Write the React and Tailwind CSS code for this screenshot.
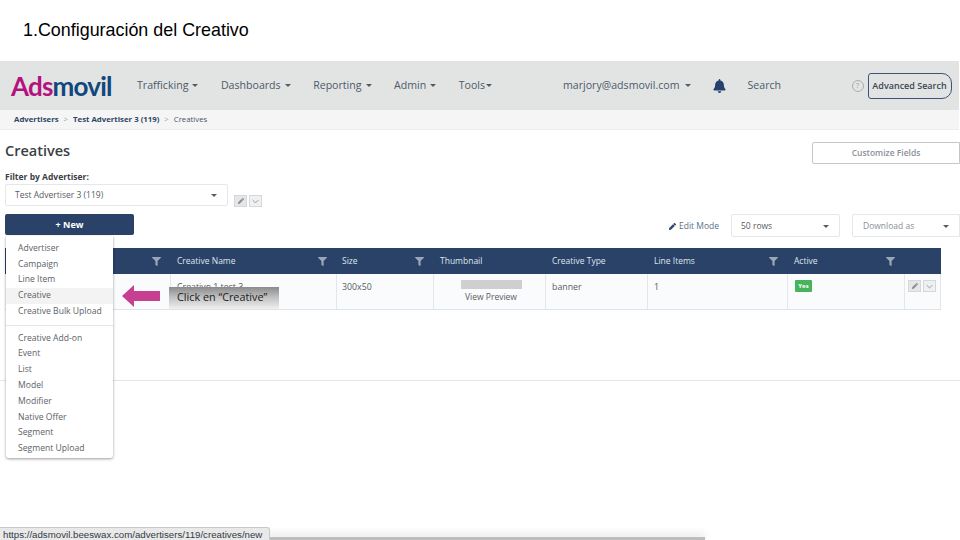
import { FaBell, FaFilter, FaPen } from 'react-icons/fa'

const NAV_ITEMS = ['Trafficking', 'Dashboards', 'Reporting', 'Admin']
const MENU_TOP = ['Advertiser', 'Campaign', 'Line Item', 'Creative', 'Creative Bulk Upload']
const MENU_BOTTOM = ['Creative Add-on', 'Event', 'List', 'Model', 'Modifier', 'Native Offer', 'Segment', 'Segment Upload']

const Caret = ({ className = 'border-t-[#555b63]' }) => (
  <span className={`inline-block w-0 h-0 border-x-[3px] border-x-transparent border-t-[3px] ${className}`} />
)

const MiniButtons = ({ className = '' }) => (
  <div className={`flex gap-[2px] ${className}`}>
    <span className="w-[13px] h-[12px] bg-[#e4e6e8] border border-[#d5d8da] flex items-center justify-center">
      <FaPen className="w-[6px] h-[6px] text-[#8a8f94]" />
    </span>
    <span className="w-[13px] h-[12px] bg-[#eef0f1] border border-[#d5d8da] flex items-center justify-center">
      <svg viewBox="0 0 10 6" className="w-[7px] h-[5px]" fill="none" stroke="#8a8f94" strokeWidth={1.2}>
        <path d="M1 1l4 4 4-4" />
      </svg>
    </span>
  </div>
)

const HeaderCell = ({ label, width, filter, pad = 'pl-[7px] pr-[9px]' }) => (
  <div className={`h-full flex items-center justify-between shrink-0 ${width} ${pad}`}>
    <span className="pt-[1px]">{label}</span>
    {filter && <FaFilter className="w-[9px] h-[9px] text-[#98a6b8]" />}
  </div>
)

const BodyCell = ({ width, children, className = 'pl-[6px] pt-[7px]' }) => (
  <div className={`h-full shrink-0 border-r border-[#e3e6ea] ${width} ${className}`}>{children}</div>
)

function DropdownMenu() {
  return (
    <div className="absolute left-[6px] top-[236px] w-[107px] h-[222px] bg-white rounded-b-[3px] shadow-[0_1px_3px_rgba(0,0,0,0.4)] text-[8.6px] leading-[15.7px] text-[#5b6167] pt-[5px]">
      {MENU_TOP.map(item => (
        <div key={item} className={`pl-[12px] ${item === 'Creative' ? 'bg-[#f3f3f3]' : ''}`}>{item}</div>
      ))}
      <div className="border-t border-[#e5e5e5] mt-[5px] mb-[5px]" />
      {MENU_BOTTOM.map(item => (
        <div key={item} className="pl-[12px] leading-[15.8px]">{item}</div>
      ))}
    </div>
  )
}

function Callout() {
  return (
    <>
      <svg viewBox="0 0 39 22" className="absolute left-[122px] top-[285px] w-[39px] h-[22px]">
        <path d="M0 11 L12 0 V6 H38 V16 H12 V22 Z" fill="#c63f90" />
      </svg>
      <div className="absolute left-[169px] top-[287px] w-[110px] h-[22px] bg-gradient-to-b from-[#8b8b8b] via-[#c4c4c4] to-[#f0f0f0] pl-[8px] pt-[2px] text-[10.8px] leading-[15px] text-[#1a1a1a]">
        Click en “Creative”
      </div>
    </>
  )
}

export default function App() {
  return (
    <div className="relative w-[960px] h-[540px] overflow-hidden bg-white font-['Open_Sans',sans-serif]">
      {/* Slide title */}
      <div className="h-[61px] pl-[23px] pt-[19px] text-[17.9px] leading-[22px] text-black font-['Liberation_Sans',sans-serif]">
        1.Configuración del Creativo
      </div>

      {/* Top nav */}
      <div className="w-[959px] h-[49px] bg-[#e2e4e4] flex items-center text-[10.6px] text-[#4d5a68]">
        <div className="w-[137px] shrink-0 pl-[11px] text-[26px] leading-[30px] font-bold tracking-[-0.8px] font-['Lato',sans-serif]">
          <span className="text-[#b5127f]">Ads</span>
          <span className="text-[#12477e]">movil</span>
        </div>
        <div className="flex gap-[22.5px] shrink-0">
          {NAV_ITEMS.map(item => (
            <span key={item} className="flex items-center gap-[4px]">{item} <Caret /></span>
          ))}
          <span className="flex items-center gap-[1px]">Tools <Caret /></span>
        </div>
        <span className="ml-[71px] shrink-0 flex items-center gap-[5px]">marjory@adsmovil.com <Caret /></span>
        <FaBell className="ml-[22px] w-[13px] h-[14px] shrink-0 text-[#25426f]" />
        <span className="ml-[22px] w-[104px] shrink-0">Search</span>
        <span className="w-[12px] h-[12px] shrink-0 rounded-full border border-[#a9adb0] text-[7px] leading-[10px] text-center text-[#9a9ea2]">?</span>
        <span className="ml-[4px] h-[26px] w-[84px] shrink-0 rounded-r-[10px] rounded-l-[3px] border border-[#3d5476] flex items-center justify-center text-[9px] font-semibold text-[#3b4653]">
          Advanced Search
        </span>
      </div>

      {/* Breadcrumb */}
      <div className="w-[959px] h-[20px] bg-[#f5f5f5] border-b border-[#ececec] flex items-center pl-[14px] text-[7.8px] text-[#47566a]">
        <span className="font-bold text-[#2f4564]">Advertisers</span>
        <span className="mx-[5px] text-[#a0a4a8]">&gt;</span>
        <span className="font-bold text-[#2f4564]">Test Advertiser 3 (119)</span>
        <span className="mx-[5px] text-[#a0a4a8]">&gt;</span>
        <span>Creatives</span>
      </div>

      {/* Heading row */}
      <div className="h-[45px] flex justify-between pl-[5px]">
        <h1 className="pt-[10px] text-[14.5px] leading-[22px] font-semibold text-[#3b3f44]">Creatives</h1>
        <div className="mt-[12px] w-[148px] h-[22px] pt-[1px] border border-[#c4c7ca] rounded-l-[2px] flex items-center justify-center text-[8.5px] font-semibold text-[#8b9097]">
          Customize Fields
        </div>
      </div>

      {/* Filter */}
      <div className="pl-[5px] text-[8.5px] leading-[12px] font-bold text-[#3b3f44] h-[9px] -mt-[4px] mb-[4px]">Filter by Advertiser:</div>
      <div className="flex pl-[5px] mt-[4px]">
        <div className="w-[223px] h-[22px] border border-[#e6e7e9] rounded-[2px] pl-[9px] pr-[10px] flex items-center justify-between text-[8.5px] text-[#555b63]">
          Test Advertiser 3 (119)
          <Caret />
        </div>
        <MiniButtons className="ml-[6px] mt-[11px]" />
      </div>

      {/* Toolbar */}
      <div className="flex items-start pl-[5px] mt-[7px]">
        <div className="w-[129px] h-[21px] pt-[1px] bg-[#2a4268] rounded-[2px] flex items-center justify-center text-[9px] font-bold text-white">+ New</div>
        <div className="ml-auto flex items-center">
          <span className="flex items-center gap-[3px] pt-[1px] text-[8.5px] text-[#5c6f88]">
            <FaPen className="w-[7px] h-[7px] text-[#33496b]" /> Edit Mode
          </span>
          <div className="ml-[12px] w-[109px] h-[23px] pt-[1px] border border-[#e6e7e9] rounded-[2px] pl-[9px] pr-[10px] flex items-center justify-between text-[8.5px] text-[#555b63]">
            50 rows <Caret />
          </div>
          <div className="ml-[12px] w-[108px] h-[23px] pt-[1px] border border-[#e6e7e9] rounded-l-[2px] pl-[10px] pr-[10px] flex items-center justify-between text-[8.5px] text-[#8b9097]">
            Download as <Caret />
          </div>
        </div>
      </div>

      {/* Table */}
      <div className="ml-[5px] w-[936px] mt-[11px]">
        <div className="h-[26px] bg-[#2a4268] flex items-center text-[8.5px] font-medium text-[#dfe5ee]">
          <HeaderCell width="w-[165px]" filter />
          <HeaderCell width="w-[166px]" label="Creative Name" filter />
          <HeaderCell width="w-[97px]" label="Size" pad="pl-[6px] pr-[9px]" filter />
          <HeaderCell width="w-[112px]" label="Thumbnail" />
          <HeaderCell width="w-[102px]" label="Creative Type" />
          <HeaderCell width="w-[140px]" label="Line Items" filter />
          <HeaderCell width="w-[117px]" label="Active" filter />
        </div>
        <div className="h-[36px] flex bg-[#fafbfd] border-b border-[#dfe2e6] text-[8.8px] leading-[12px] text-[#555b63]">
          <BodyCell width="w-[166px]" />
          <BodyCell width="w-[166px]">Creativo 1 test 3</BodyCell>
          <BodyCell width="w-[97px]" className="pl-[5px] pt-[7px]">300x50</BodyCell>
          <BodyCell width="w-[112px]" className="flex flex-col items-center pl-[3px] pt-[6px]">
            <span className="w-[61px] h-[9px] bg-[#cfcfcf]" />
            <span className="mt-[2px] text-[8.5px]">View Preview</span>
          </BodyCell>
          <BodyCell width="w-[102px]">banner</BodyCell>
          <BodyCell width="w-[140px]">1</BodyCell>
          <BodyCell width="w-[117px]" className="pl-[7px] pt-[6px]">
            <span className="block w-[17px] h-[12px] rounded-[1px] bg-[#47b35b] text-[6px] leading-[12px] text-center font-bold text-white">Yes</span>
          </BodyCell>
          <div className="flex-1 border-r border-[#e3e6ea] pl-[3px] pt-[6px]">
            <MiniButtons />
          </div>
        </div>
      </div>
      <div className="mt-[70px] border-t border-[#e3e5e8]" />

      <DropdownMenu />
      <Callout />

      {/* Browser status bar */}
      <div className="absolute left-0 bottom-0 w-[705px] h-[3px] bg-[#bdbdbd] shadow-[0_-2px_8px_rgba(0,0,0,0.2)]" />
      <div className="absolute left-0 bottom-0 w-[270px] h-[13px] bg-[#e9e9e9] border-t border-r border-[#c8c8c8] rounded-tr-[3px] pl-[3px] text-[9.7px] leading-[13px] text-[#333b44] font-['Liberation_Sans',sans-serif] whitespace-nowrap">
        https://adsmovil.beeswax.com/advertisers/119/creatives/new
      </div>
    </div>
  )
}
